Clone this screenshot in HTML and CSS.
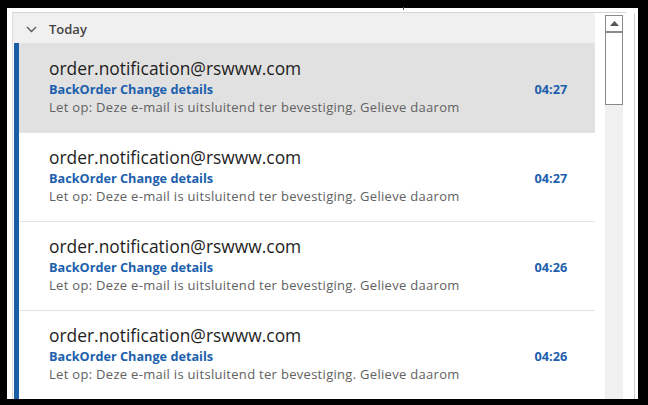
FILE: index.html
```html
<!DOCTYPE html>
<html>
<head>
<meta charset="utf-8">
<link rel="stylesheet" href="styles.css">
</head>
<body>
<div class="frame">
  <div class="panel">
    <div class="topline"><span class="tick"></span></div>
    <div class="main">
      <div class="list">
        <div class="group">
          <svg class="chev" width="11" height="7" viewBox="0 0 11 7"><path d="M1 1 L5.5 5.5 L10 1" fill="none" stroke="#555" stroke-width="1.3"/></svg>
          <span class="group-title">Today</span>
        </div>
        <div class="mail selected">
          <div class="mail-body">
            <div class="sender">order.notification@rswww.com</div>
            <div class="line2"><span class="subject">BackOrder Change details</span><span class="time">04:27</span></div>
            <div class="preview">Let op: Deze e-mail is uitsluitend ter bevestiging. Gelieve daarom</div>
          </div>
        </div>
        <div class="mail">
          <div class="mail-body">
            <div class="sender">order.notification@rswww.com</div>
            <div class="line2"><span class="subject">BackOrder Change details</span><span class="time">04:27</span></div>
            <div class="preview">Let op: Deze e-mail is uitsluitend ter bevestiging. Gelieve daarom</div>
          </div>
        </div>
        <div class="mail">
          <div class="mail-body">
            <div class="sender">order.notification@rswww.com</div>
            <div class="line2"><span class="subject">BackOrder Change details</span><span class="time">04:26</span></div>
            <div class="preview">Let op: Deze e-mail is uitsluitend ter bevestiging. Gelieve daarom</div>
          </div>
        </div>
        <div class="mail">
          <div class="mail-body">
            <div class="sender">order.notification@rswww.com</div>
            <div class="line2"><span class="subject">BackOrder Change details</span><span class="time">04:26</span></div>
            <div class="preview">Let op: Deze e-mail is uitsluitend ter bevestiging. Gelieve daarom</div>
          </div>
        </div>
      </div>
      <div class="gap"></div>
      <div class="scrollbar">
        <div class="arrow"><svg width="9" height="5" viewBox="0 0 9 5"><path d="M0 5 L4.5 0 L9 5 Z" fill="#555"/></svg></div>
        <div class="thumb"></div>
        <div class="track"></div>
      </div>
      <div class="edge"></div>
    </div>
  </div>
</div>
</body>
</html>
```
FILE: styles.css
```css
html, body {
  margin: 0;
  padding: 0;
  background: #000;
  width: 648px;
  height: 405px;
  overflow: hidden;
}
.frame {
  box-sizing: border-box;
  width: 648px;
  height: 405px;
  padding: 8px 10px 6px 7px;
}
.panel {
  background: #fff;
  height: 100%;
  display: flex;
  flex-direction: column;
  padding-left: 5px;
  box-sizing: border-box;
}
.topline {
  height: 5px;
  border-bottom: 1px solid #d6d6d6;
  box-sizing: border-box;
  margin-right: 12px;
  position: relative;
}
.tick {
  position: absolute;
  left: 391px;
  top: -1px;
  width: 1px;
  height: 3px;
  background: #555;
}
.main {
  flex: 1;
  display: flex;
  min-height: 0;
}
.list {
  width: 585px;
  border-left: 1px solid #dcdcdc;
  display: flex;
  flex-direction: column;
  overflow: hidden;
}
.group {
  height: 30px;
  flex: none;
  box-sizing: border-box;
  padding-top: 2px;
  background: #f0f0f0;
  display: flex;
  align-items: center;
  padding-left: 13px;
  font-family: "Open Sans", "Noto Sans", sans-serif;
}
.chev { margin-right: 12px; margin-top: 1px; }
.group-title {
  font-weight: 600;
  font-size: 13px;
  color: #444;
}
.mail {
  flex: none;
  height: 89px;
  box-sizing: border-box;
  border-left: 5px solid #1a5ea8;
  margin-left: 1px;
  display: flex;
  font-family: "Open Sans", "Noto Sans", sans-serif;
}
.mail + .mail .mail-body { border-top: 1px solid #e3e3e3; }
.mail.selected { background: #e1e1e1; }
.mail-body {
  flex: 1;
  padding: 15px 28px 0 30px;
  box-sizing: border-box;
}
.mail + .mail .mail-body { padding-top: 14px; }
.sender {
  font-size: 17.4px;
  color: #1e1e1e;
  line-height: 21px;
}
.line2 {
  display: flex;
  justify-content: space-between;
  align-items: center;
  line-height: 17px;
  margin-top: 2px;
}
.subject, .time {
  font-size: 12.7px;
  font-weight: 700;
  color: #1c60ad;
}
.preview {
  font-size: 13px;
  letter-spacing: 0.3px;
  color: #616161;
  line-height: 18px;
}
.gap { width: 10px; }
.scrollbar {
  width: 18px;
  display: flex;
  flex-direction: column;
  margin-top: 2px;
}
.arrow {
  height: 18px;
  box-sizing: border-box;
  border: 1px solid #8a8a8a;
  border-bottom: 2px solid #8a8a8a;
  display: flex;
  align-items: center;
  justify-content: center;
  background: #fff;
}
.thumb {
  height: 72px;
  box-sizing: border-box;
  border: 1px solid #8a8a8a;
  border-top: none;
  background: #fff;
}
.track { flex: 1; background: #f0f0f0; }
.edge {
  width: 12px;
  box-sizing: border-box;
  border-right: 1px solid #cfcfcf;
  margin-right: 3px;
}
```
